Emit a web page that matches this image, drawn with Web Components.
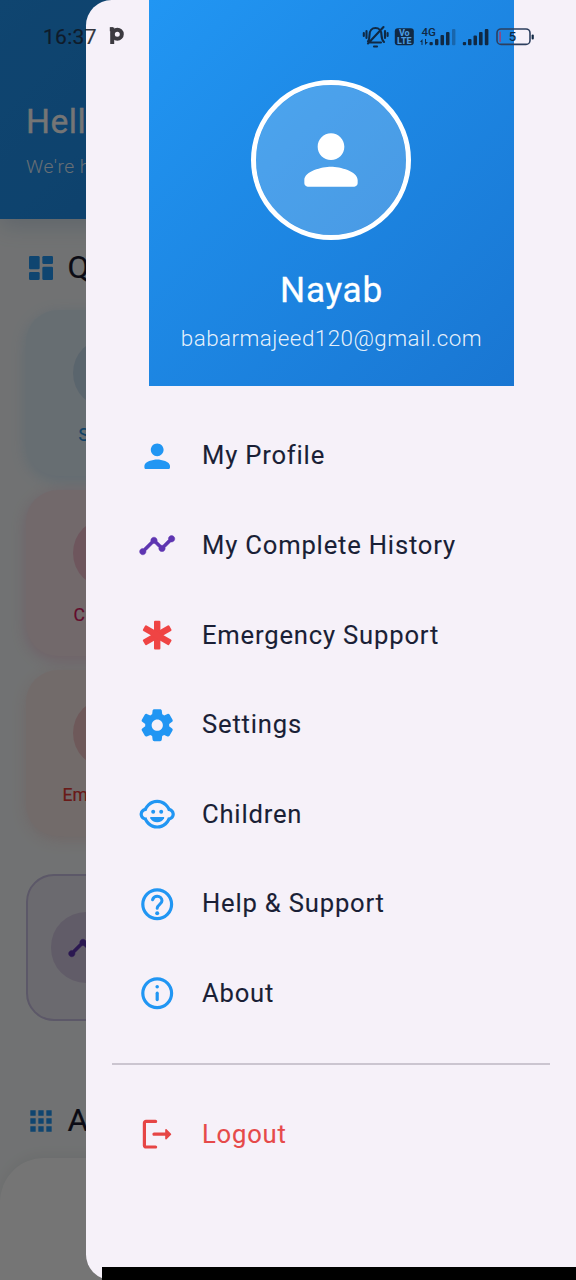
<!DOCTYPE html>
<html lang="en">
<head>
<meta charset="utf-8">
<title>Parent care</title>
<style>
html,body{margin:0;height:100%}
body{font-family:Roboto,"Liberation Sans",sans-serif;overflow:hidden}
</style>
</head>
<body>
<app-screen>
  <home-page slot="page"></home-page>
  <side-drawer slot="drawer">
    <profile-header name="Nayab" email="babarmajeed120@gmail.com"></profile-header>
    <menu-item icon="person">My Profile</menu-item>
    <menu-item icon="timeline" style="--tint:#5e35b1">My Complete History</menu-item>
    <menu-item icon="emergency" style="--tint:#ef4444">Emergency Support</menu-item>
    <menu-item icon="settings">Settings</menu-item>
    <menu-item icon="child">Children</menu-item>
    <menu-item icon="help">Help &amp; Support</menu-item>
    <menu-item icon="info">About</menu-item>
    <menu-item slot="footer" icon="logout" style="--tint:#e64545;--ink:#e64a4a">Logout</menu-item>
  </side-drawer>
  <status-bar slot="status"></status-bar>
</app-screen>
<script>
const ICONS = {
  person:'<path d="M12 12c2.21 0 4-1.79 4-4s-1.79-4-4-4-4 1.79-4 4 1.790 4 4 4zm0 2c-2.67 0-8 1.340-8 4v1c0 .55.45 1 1 1h14c.55 0 1-.45 1-1v-1c0-2.660-5.330-4-8-4z"/>',
  timeline:'<path d="M23 8c0 1.1-.9 2-2 2-.18 0-.35-.02-.51-.07l-3.56 3.55c.05.16.07.34.07.52 0 1.1-.9 2-2 2s-2-.9-2-2c0-.18.02-.36.07-.52l-2.55-2.55c-.16.05-.34.07-.52.07s-.36-.02-.52-.07l-4.55 4.56c.05.16.07.33.07.51 0 1.1-.9 2-2 2s-2-.9-2-2 .9-2 2-2c.18 0 .35.02.51.07l4.56-4.55C8.02 9.36 8 9.18 8 9c0-1.1.9-2 2-2s2 .9 2 2c0 .18-.02.36-.07.52l2.55 2.55c.16-.05.34-.07.52-.07s.36.02.52.07l3.55-3.56C19.02 8.35 19 8.18 19 8c0-1.1.9-2 2-2s2 .9 2 2z" stroke="currentColor" stroke-width=".3"/>',
  emergency:'<g><rect x="10" y="3" width="4" height="18" rx=".7"/><rect x="10" y="2.500" width="4" height="19" rx=".7" transform="rotate(60 12 12)"/><rect x="10" y="2.500" width="4" height="19" rx=".7" transform="rotate(120 12 12)"/></g>',
  settings:'<path d="M19.5 12c0-.23-.01-.45-.03-.68l1.86-1.41c.4-.3.51-.86.26-1.3l-1.87-3.23c-.25-.44-.79-.62-1.25-.42l-2.15.91c-.37-.26-.76-.49-1.17-.68l-.29-2.31c-.06-.5-.49-.88-.99-.88h-3.73c-.51 0-.94.38-1 .88l-.29 2.31c-.41.19-.8.42-1.17.68l-2.15-.91c-.46-.2-1-.02-1.25.42L2.41 8.62c-.25.44-.14.99.26 1.3l1.86 1.41c-.02.22-.03.44-.03.67s.01.45.03.68l-1.86 1.41c-.4.3-.51.86-.26 1.3l1.87 3.23c.25.44.79.62 1.25.42l2.15-.91c.37.26.76.49 1.17.68l.29 2.31c.06.5.49.88.99.88h3.73c.5 0 .93-.38.99-.88l.29-2.31c.41-.19.8-.42 1.17-.68l2.15.91c.46.2 1 .02 1.25-.42l1.87-3.23c.25-.44.14-.99-.26-1.3l-1.86-1.41c.03-.23.04-.45.04-.68zm-7.46 3.5c-1.93 0-3.5-1.57-3.5-3.5s1.57-3.5 3.5-3.5 3.5 1.57 3.5 3.5-1.57 3.5-3.5 3.5z"/>',
  child:'<circle cx="14.5" cy="10.5" r="1.25"/><circle cx="9.5" cy="10.5" r="1.25"/><path d="M8.1 13.8h7.8c.4 0 .6.35.42.7C15.5 16.05 13.9 17 12 17s-3.500-.95-4.320-2.500c-.18-.35.02-.7.42-.7z"/><path d="M22.94 12.66c.04-.21.06-.43.06-.66s-.02-.45-.06-.66c-.25-1.51-1.36-2.74-2.81-3.17-.53-1.12-1.28-2.1-2.19-2.91C16.36 3.85 14.28 3 12 3s-4.36.85-5.94 2.26c-.92.81-1.67 1.8-2.19 2.91-1.45.43-2.56 1.65-2.81 3.17-.04.21-.06.43-.06.66s.02.45.06.66c.25 1.51 1.36 2.74 2.81 3.17.52 1.11 1.27 2.09 2.17 2.89C7.62 20.14 9.71 21 12 21s4.38-.86 5.97-2.28c.9-.8 1.65-1.79 2.17-2.89 1.44-.43 2.55-1.65 2.8-3.17zM19 14c-.1 0-.19-.02-.29-.03-.2.67-.49 1.29-.86 1.86C16.6 17.74 14.45 19 12 19s-4.6-1.26-5.85-3.17c-.37-.57-.66-1.19-.86-1.86-.1.01-.19.03-.29.03-1.1 0-2-.9-2-2s.9-2 2-2c.1 0 .19.02.29.03.2-.67.49-1.29.86-1.86C7.4 6.26 9.55 5 12 5s4.6 1.26 5.85 3.17c.37.57.66 1.19.86 1.86.1-.01.19-.03.29-.03 1.1 0 2 .9 2 2s-.9 2-2 2z"/>',
  help:'<circle cx="12" cy="12" r="9" fill="none" stroke="currentColor" stroke-width="2"/><path d="M9.100 9.200C9.500 7.900 10.600 7 12 7c1.700 0 3 1.200 3 2.900 0 2.100-3 2.300-3 4.700" fill="none" stroke="currentColor" stroke-width="1.900" stroke-linecap="round"/><circle cx="12" cy="17.600" r="1.250"/>',
  info:'<circle cx="12" cy="12" r="9" fill="none" stroke="currentColor" stroke-width="2"/><rect x="11" y="11" width="2" height="6" rx="1"/><circle cx="12" cy="8" r="1.100"/>',
  logout:'<path d="M5 5h6c.55 0 1-.45 1-1s-.45-1-1-1H5c-1.1 0-2 .9-2 2v14c0 1.1.9 2 2 2h6c.55 0 1-.45 1-1s-.45-1-1-1H5V5z"/><path d="M20.65 11.65l-2.79-2.79c-.32-.32-.86-.1-.86.35V11h-7c-.55 0-1 .45-1 1s.45 1 1 1h7v1.79c0 .45.54.67.85.35l2.79-2.79c.2-.19.2-.51.01-.7z"/>',
  dashboard:'<rect x="3" y="3" width="8" height="10" rx="1"/><rect x="3" y="15" width="8" height="6" rx="1"/><rect x="13" y="3" width="8" height="6" rx="1"/><rect x="13" y="11" width="8" height="10" rx="1"/>',
  apps:'<path d="M4 4h4v4H4zM10 4h4v4h-4zM16 4h4v4h-4zM4 10h4v4H4zM10 10h4v4h-4zM16 10h4v4h-4zM4 16h4v4H4zM10 16h4v4h-4zM16 16h4v4h-4z"/>'
};
function define(name, html){
  customElements.define(name, class extends HTMLElement{
    constructor(){
      super();
      const t=document.createElement('template');
      t.innerHTML=typeof html==='function'?html(this):html;
      this.attachShadow({mode:'open'}).append(t.content.cloneNode(true));
    }
  });
}
const at=(el,n)=>el.getAttribute(n)||'';

define('md-icon', el=>`<style>:host{display:block;flex:none;width:var(--size,38.4px);height:var(--size,38.4px)}svg{display:block;width:100%;height:100%;fill:currentColor}</style>
<svg viewBox="0 0 24 24">${ICONS[at(el,'name')]}</svg>`);

define('menu-item', el=>`<style>
:host{display:flex;align-items:center;height:89.6px;padding-left:51.2px;color:var(--ink,#1a1f36);font-size:25.6px;letter-spacing:.82px;white-space:nowrap}
md-icon{color:var(--tint,#2196f3);margin-right:26px}
span{display:block;padding-bottom:1px;-webkit-text-stroke:.1px currentColor}
</style><md-icon name="${at(el,'icon')}"></md-icon><span><slot></slot></span>`);

define('profile-header', el=>`<style>
:host{display:flex;flex-direction:column;align-items:center;box-sizing:border-box;width:365.4px;height:385.6px;padding-top:80px;margin:0 0 25.6px 62.4px;background:linear-gradient(135deg,#2196f3,#1976d2);color:#fff}
.ring{box-sizing:border-box;width:160px;height:160px;border:5px solid #fff;border-radius:50%;background:rgba(255,255,255,.2);background-clip:padding-box;display:grid;place-items:center}
md-icon{--size:80px}
.n{margin-top:29px;font-size:35.2px;line-height:42px;font-weight:400;letter-spacing:.7px;-webkit-text-stroke:.3px currentColor}
.e{margin-top:13px;font-size:22.4px;line-height:28px;font-weight:300;letter-spacing:.46px;color:rgba(255,255,255,.9)}
</style><div class="ring"><md-icon name="person"></md-icon></div><div class="n">${at(el,'name')}</div><div class="e">${at(el,'email')}</div>`);

define('side-drawer', `<style>
:host{display:block;box-sizing:border-box;background:#f6f1f9;border-radius:25.6px 0 0 25.6px;overflow:hidden}
hr{border:0;height:2px;background:#cbc5d0;margin:24.4px 25.6px 24.8px}
</style><slot></slot><hr><slot name="footer"></slot>`);

define('section-title', el=>`<style>
:host{display:flex;align-items:center;gap:10px;height:40px;padding-left:25.4px;font-size:32px;font-weight:400;color:#1a1a2e}
md-icon{--size:32px;color:#2196f3}
span{margin-top:-2px;-webkit-text-stroke:.2px currentColor}
</style><md-icon name="${at(el,'icon')}"></md-icon><span><slot></slot></span>`);

define('action-card', `<style>
:host{display:flex;flex-direction:column;align-items:center;box-sizing:border-box;height:166px;width:165px;padding-top:28px;border-radius:32px;background:var(--bg);box-shadow:0 4px 16px var(--shade);color:var(--tint);font-size:17.6px;font-weight:400}
i{display:block;width:70.4px;height:70.4px;border-radius:50%;background:var(--disc)}
span{display:block;width:var(--w);margin-top:15.600px;line-height:22px;white-space:nowrap;-webkit-text-stroke:.2px currentColor}
</style><i></i><span><slot></slot></span>`);

define('home-page', `<style>
:host{display:block;background:#f6f9fa;height:1280px;overflow:hidden}
header{box-sizing:border-box;height:219px;padding:100px 0 0 26px;background:linear-gradient(135deg,#2196f3,#1e88e5);box-shadow:0 6px 22px rgba(33,100,160,.2);color:#fff}
h1{margin:0;font-size:33.6px;line-height:43px;font-weight:400;letter-spacing:.5px;-webkit-text-stroke:.3px currentColor}
p{margin:13px 0 0;font-size:19.2px;line-height:22px;font-weight:300;letter-spacing:.5px;color:#ffffffe0}
.q{margin:29px 0 22px}
.cards{display:flex;flex-direction:column;gap:14px;padding-left:25.6px}
.history{box-sizing:border-box;width:525px;height:147px;margin:38px 0 0 25.6px;border:2.4px solid #c8bfe2;border-radius:28px;background:#eae6f2;display:flex;align-items:center;padding-left:23px}
.disc{width:70.4px;height:70.4px;border-radius:50%;background:#d3c9e3;display:grid;place-items:center;color:#5e35b1}
.a{margin:80px 0 17px}
.sheet{height:140px;background:#fff;border-radius:44px 44px 0 0;box-shadow:0 -4px 12px rgba(0,0,0,.05)}
</style>
<header><h1>Hell</h1><p>We're h</p></header>
<section-title class="q" icon="dashboard">Q</section-title>
<div class="cards">
<action-card style="--bg:#e1eff9;--shade:#2196f32e;--disc:#c5dced;--tint:#2490e0;--w:59px">S</action-card>
<action-card style="--bg:#f8e4ea;--shade:#e91e632e;--disc:#efbccb;--tint:#d81b60;--w:69px">C</action-card>
<action-card style="--bg:#f9e9e8;--shade:#f4433622;--disc:#f0c3c5;--tint:#e53935;--w:91px">Em</action-card>
</div>
<div class="history"><div class="disc"><md-icon name="timeline"></md-icon></div></div>
<section-title class="a" icon="apps">A</section-title>
<div class="sheet"></div>`);

define('status-bar', `<style>
:host{display:flex;align-items:center;height:72px;padding:0 26px 0 43px;box-sizing:border-box;color:#10151d}
time{font-size:21px;font-weight:400;letter-spacing:.3px;width:66px;margin-top:1px;opacity:.85;-webkit-text-stroke:.2px currentColor}
.p{width:15px;height:20px}
.s{margin-left:auto;width:200px;height:50px}
svg{display:block}
text{font-family:Roboto,sans-serif}
</style><time>16:37</time>
<svg class="p" viewBox="0 0 15 20" fill="none" stroke="#3c3a40" stroke-width="4"><path d="M3.200 1.500V18"/><circle cx="8.300" cy="8.200" r="4.500"/><path d="M.8 3.200H4"/></svg>
<svg class="s" viewBox="0 0 200 50" fill="#102944" stroke="none">
<g fill="none" stroke="#102944" stroke-width="2.100" stroke-linecap="round"><path d="M18 30.500c1.500-2 1.500-4 1.500-6.500 0-4 2.500-7 6-7s6 3 6 7c0 3 .5 5 2.500 7M18.500 31.500H31M18 32.500L33.500 16"/><path d="M16.500 20v7M13.800 22v3M35 20v7M37.600 22v3"/><path d="M24 35.500h3"/></g>
<rect x="44.800" y="17.200" width="19" height="17" rx="3"/>
<text x="54.300" y="25.400" font-size="9" font-weight="800" text-anchor="middle" fill="#4a9be0">Vo</text><text x="54.300" y="33" font-size="9" font-weight="800" text-anchor="middle" fill="#4a9be0">LTE</text>
<text x="71.500" y="25" font-size="11.500" font-weight="500">4G</text>
<path d="M70 31l2.500-3v6h-1v-3zM75 28v6l3-3h-2v-3z"/>
<rect x="79.500" y="31" width="3.300" height="3.200" rx="1"/><rect x="85" y="28" width="3.400" height="6.200" rx="1"/><rect x="90.500" y="24" width="3.500" height="10.200" rx="1"/><rect x="96" y="21" width="3.500" height="13.200" rx="1"/><rect x="102" y="18" width="3.400" height="16.200" rx="1" opacity=".35"/>
<rect x="112.800" y="31" width="3.300" height="3.200" rx="1"/><rect x="118" y="28" width="3.500" height="6.200" rx="1"/><rect x="123.500" y="24.500" width="3.500" height="9.700" rx="1"/><rect x="129" y="21" width="3.600" height="13.200" rx="1"/><rect x="134.800" y="18" width="3.600" height="16.200" rx="1"/>
<rect x="147" y="18" width="33" height="15.400" rx="4" fill="none" stroke="#2d3f5e" stroke-width="1.600"/><rect x="149.200" y="20.500" width="1.800" height="10.500" rx=".8" fill="#8a4a86"/><rect x="181.600" y="23.500" width="2.200" height="5" rx="1"/>
<text x="162.500" y="30.400" font-size="13" font-weight="500" text-anchor="middle">5</text>
</svg>`);

define('app-screen', `<style>
:host{display:block;position:relative;width:576px;height:1280px;overflow:hidden}
.scrim{position:absolute;inset:0;background:rgba(0,0,0,.54)}
slot[name=drawer]::slotted(*){position:absolute;inset:0 0 0 86.4px}
slot[name=status]::slotted(*){position:absolute;inset:0 0 auto 0}
.nav{position:absolute;right:0;bottom:0;width:474px;height:13px;background:#000}
</style><slot name="page"></slot><div class="scrim"></div><slot name="drawer"></slot><slot name="status"></slot><div class="nav"></div>`);
</script>
</body>
</html>
